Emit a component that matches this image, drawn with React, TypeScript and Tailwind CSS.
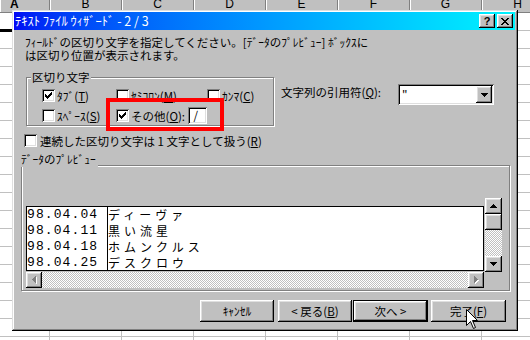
import React from 'react';

type Span = [number, number, number];

const COLS = ['A', 'B', 'C', 'D', 'E', 'F', 'G', 'H'];
const ROWS = Array.from({ length: 19 }, (_, i) => i);

const PREVIEW: [string, string][] = [
  ['98.04.04', 'ディーヴァ'],
  ['98.04.11', '黒い流星'],
  ['98.04.18', 'ホムンクルス'],
  ['98.04.25', 'デスクロウ'],
];

// win95 bevels
const raised =
  'shadow-[inset_-1px_-1px_0_#000,inset_1px_1px_0_#fff,inset_-2px_-2px_0_#808080,inset_2px_2px_0_#dfdfdf]';
const sunken =
  'shadow-[inset_1px_1px_0_#808080,inset_-1px_-1px_0_#fff,inset_2px_2px_0_#000,inset_-2px_-2px_0_#dfdfdf]';
const etched = 'border border-[#808080] shadow-[1px_1px_0_#fff,inset_1px_1px_0_#fff]';
const checker =
  'bg-[image:conic-gradient(#fff_25%,#c0c0c0_0_50%,#fff_0_75%,#c0c0c0_0)] bg-[length:2px_2px]';

const CHECK: Span[] = [[6, 0, 1], [5, 1, 2], [0, 2, 1], [4, 2, 3], [0, 3, 2], [3, 3, 3], [0, 4, 5], [1, 5, 3], [2, 6, 1]];
const CLOSE: Span[] = [[0, 0, 2], [6, 0, 2], [1, 1, 2], [5, 1, 2], [2, 2, 4], [3, 3, 2], [2, 4, 4], [1, 5, 2], [5, 5, 2], [0, 6, 2], [6, 6, 2]];
const DOWN: Span[] = [[0, 0, 7], [1, 1, 5], [2, 2, 3], [3, 3, 1]];
const UP: Span[] = [[3, 0, 1], [2, 1, 3], [1, 2, 5], [0, 3, 7]];
const LEFT: Span[] = [[3, 0, 1], [2, 1, 2], [1, 2, 3], [0, 3, 4], [1, 4, 3], [2, 5, 2], [3, 6, 1]];
const RIGHT: Span[] = [[0, 0, 1], [0, 1, 2], [0, 2, 3], [0, 3, 4], [0, 4, 3], [0, 5, 2], [0, 6, 1]];

function Pix({ spans, w, h, color = '#000', ghost }: { spans: Span[]; w: number; h: number; color?: string; ghost?: boolean }) {
  return (
    <svg width={w + (ghost ? 1 : 0)} height={h + (ghost ? 1 : 0)} shapeRendering="crispEdges">
      {ghost && spans.map(([x, y, l], i) => <rect key={'g' + i} x={x + 1} y={y + 1} width={l} height={1} fill="#fff" />)}
      {spans.map(([x, y, l], i) => <rect key={i} x={x} y={y} width={l} height={1} fill={color} />)}
    </svg>
  );
}

function Check({ on }: { on?: boolean }) {
  return (
    <span className={`w-[13px] h-[13px] shrink-0 bg-white flex items-center justify-center ${sunken}`}>
      {on && <Pix spans={CHECK} w={7} h={7} />}
    </span>
  );
}

function Option({ on, children }: { on?: boolean; children: React.ReactNode }) {
  return (
    <div className="flex items-center h-[13px] whitespace-nowrap">
      <Check on={on} />
      <span className="ml-[2px]">{children}</span>
    </div>
  );
}

function Sheet() {
  return (
    <div className="flex flex-col">
      <div className="flex h-[13px] bg-[#c0c0c0] border-b border-[#808080] font-['Liberation_Sans',sans-serif] text-[12px]">
        {COLS.map((c, i) => (
          <div
            key={c}
            className={`shrink-0 border-r border-[#808080] shadow-[inset_1px_0_0_#fff] ${
              i === 0 ? 'w-[50px] pl-[10px] font-bold' : 'w-[72px] text-center'
            }`}
          >
            <span className="block -translate-y-[2px]">{c}</span>
          </div>
        ))}
      </div>
      {ROWS.map((r) => (
        <div key={r} className="flex h-[18px]">
          {COLS.map((c, i) => (
            <div
              key={c}
              className={`shrink-0 border-r border-b border-[#c0c0c0] ${i === 0 ? 'w-[50px]' : 'w-[72px]'} ${
                i === 0 && r === 0 ? 'border-b-black shadow-[inset_0_-1px_0_#000]' : ''
              } ${i === 0 && r === 1 ? 'shadow-[inset_0_1px_0_#000]' : ''}`}
            />
          ))}
        </div>
      ))}
    </div>
  );
}

function Dialog() {
  return (
    <div className="absolute left-[12px] top-[10px] w-[506px] h-[321px] bg-[#c0c0c0] pl-[2px] pt-[2px] pr-[3px] flex flex-col shadow-[inset_-1px_-1px_0_#000,inset_1px_1px_0_#dfdfdf,inset_-2px_-2px_0_#808080,inset_2px_2px_0_#fff]">
      {/* Title bar */}
      <div className="h-[18px] shrink-0 flex items-center bg-linear-to-r from-[#0606f4] to-[#00f4ff] pl-[1px] pr-[2px]">
        <span className="text-white whitespace-nowrap text-[12.5px]">ﾃｷｽﾄ ﾌｧｲﾙ ｳｨｻﾞｰﾄﾞ - 2 / 3</span>
        <div className="ml-auto flex gap-[2px]">
          <div className={`w-[16px] h-[14px] bg-[#c0c0c0] flex items-center justify-center font-['Liberation_Sans',sans-serif] font-bold text-[11px] leading-none ${raised}`}>
            ?
          </div>
          <div className={`w-[16px] h-[14px] bg-[#c0c0c0] flex items-center justify-center ${raised}`}>
            <Pix spans={CLOSE} w={8} h={7} />
          </div>
        </div>
      </div>

      <p className="mt-[6px] ml-[11px] leading-[13px] whitespace-nowrap">
        ﾌｨｰﾙﾄﾞの区切り文字を指定してください。[ﾃﾞｰﾀのﾌﾟﾚﾋﾞｭｰ] ﾎﾞｯｸｽに
        <br />
        は区切り位置が表示されます。
      </p>

      <div className="mt-[15px] flex items-start">
        {/* 区切り文字 group */}
        <div className={`relative ml-[12px] w-[248px] h-[49px] shrink-0 ${etched}`}>
          <span className="absolute left-[4px] -top-[7px] px-[1px] bg-[#c0c0c0]">区切り文字</span>
          <div className="grid grid-cols-[74px_91px_auto] gap-y-[7px] pt-[11px] pl-[15px]">
            <Option on>
              ﾀﾌﾞ(<span className="underline">T</span>)
            </Option>
            <Option>
              ｾﾐｺﾛﾝ(<span className="underline">M</span>)
            </Option>
            <Option>
              ｶﾝﾏ(<span className="underline">C</span>)
            </Option>
            <Option>
              ｽﾍﾟｰｽ(<span className="underline">S</span>)
            </Option>
            <div className="flex items-center h-[13px] whitespace-nowrap">
              <Check on />
              <span className="ml-[2px] w-[63px]">
                その他(<span className="underline">O</span>):
              </span>
              <div className={`-my-[2px] w-[21px] h-[17px] bg-white pl-[6px] leading-[17px] ${sunken}`}>/</div>
            </div>
          </div>
        </div>

        {/* 引用符 */}
        <div className="ml-[7px] mt-[7px] flex items-start">
          <span className="w-[117px] mt-[2px] whitespace-nowrap">
            文字列の引用符(<span className="underline">Q</span>):
          </span>
          <div className={`w-[96px] h-[21px] bg-white flex p-[2px] ${sunken}`}>
            <span className="flex-1 pl-[2px] leading-[17px]">"</span>
            <div className={`w-[16px] h-[17px] bg-[#c0c0c0] flex items-center justify-center ${raised}`}>
              <Pix spans={DOWN} w={7} h={4} />
            </div>
          </div>
        </div>
      </div>

      <div className="mt-[8px] ml-[10px] flex items-center h-[13px] whitespace-nowrap">
        <Check />
        <span className="ml-[3px]">
          連続した区切り文字は 1 文字として扱う(<span className="underline">R</span>)
        </span>
      </div>

      {/* Preview group */}
      <div className={`relative mt-[18px] ml-[7px] w-[489px] h-[126px] shrink-0 flex items-start pl-[4px] ${etched}`}>
        <span className="absolute -left-[1px] -top-[13px] pr-[2px] pb-[2px] bg-[#c0c0c0] whitespace-nowrap">
          ﾃﾞｰﾀのﾌﾟﾚﾋﾞｭｰ
        </span>
        <div className="mt-[40px] w-[458px] shrink-0">
          <div className="h-[65px] border border-black bg-white flex overflow-hidden">
            <div className="w-[81px] shrink-0 border-r border-black font-['Liberation_Mono',monospace] text-[13px] tracking-[1.1px]">
              {PREVIEW.map(([d]) => (
                <div key={d} className="h-[16px] leading-[16px] whitespace-nowrap">
                  {d}
                </div>
              ))}
            </div>
            <div className="tracking-[4px] text-[12px]">
              {PREVIEW.map(([d, n]) => (
                <div key={d} className="h-[16px] leading-[16px] whitespace-nowrap">
                  {n}
                </div>
              ))}
            </div>
          </div>
          <div className="mt-[1px] h-[16px] flex">
            <div className={`w-[16px] h-[16px] bg-[#c0c0c0] flex items-center justify-center ${raised}`}>
              <Pix spans={LEFT} w={4} h={7} color="#808080" ghost />
            </div>
            <div className={`flex-1 ${checker}`} />
            <div className={`w-[16px] h-[16px] bg-[#c0c0c0] flex items-center justify-center ${raised}`}>
              <Pix spans={RIGHT} w={4} h={7} color="#808080" ghost />
            </div>
          </div>
        </div>
        <div className="ml-[1px] mt-[32px] w-[17px] flex flex-col">
          <div className={`h-[16px] bg-[#c0c0c0] flex items-center justify-center ${raised}`}>
            <Pix spans={UP} w={7} h={4} />
          </div>
          <div className={`h-[16px] bg-[#c0c0c0] ${raised}`} />
          <div className={`h-[26px] ${checker}`} />
          <div className={`h-[16px] bg-[#c0c0c0] flex items-center justify-center ${raised}`}>
            <Pix spans={DOWN} w={7} h={4} />
          </div>
        </div>
      </div>

      {/* Buttons */}
      <div className="mt-[9px] ml-[186px] flex">
        <div className={`w-[74px] h-[22px] flex items-center justify-center ${raised}`}>ｷｬﾝｾﾙ</div>
        <div className={`ml-[4px] w-[74px] h-[22px] flex items-center justify-center whitespace-nowrap ${raised}`}>
          &lt; 戻る(<span className="underline">B</span>)
        </div>
        <div className={`ml-[1px] w-[75px] h-[22px] flex items-center justify-center border border-black whitespace-nowrap ${raised}`}>
          次へ &gt;
        </div>
        <div className={`ml-[3px] w-[75px] h-[22px] flex items-center justify-center whitespace-nowrap ${raised}`}>
          完了(<span className="underline">F</span>)
        </div>
      </div>

      {/* annotation */}
      <div className="absolute left-[94px] top-[88px] w-[118px] h-[33px] border-4 border-[#ff0000]" />
    </div>
  );
}

export default function App() {
  return (
    <div className="relative w-[530px] h-[340px] overflow-hidden bg-white text-black text-[11.5px] leading-[12px] font-['Noto_Sans_CJK_JP',sans-serif]">
      <Sheet />
      <Dialog />
      <svg className="absolute left-[466px] top-[309px]" width="13" height="21" viewBox="0 0 13 21">
        <path d="M0.5 0.5 L0.5 16.5 L4.5 12.5 L7.5 19.5 L9.5 18.5 L6.5 11.5 L11.5 11.5 Z" fill="#fff" stroke="#000" strokeWidth="1" />
      </svg>
    </div>
  );
}
